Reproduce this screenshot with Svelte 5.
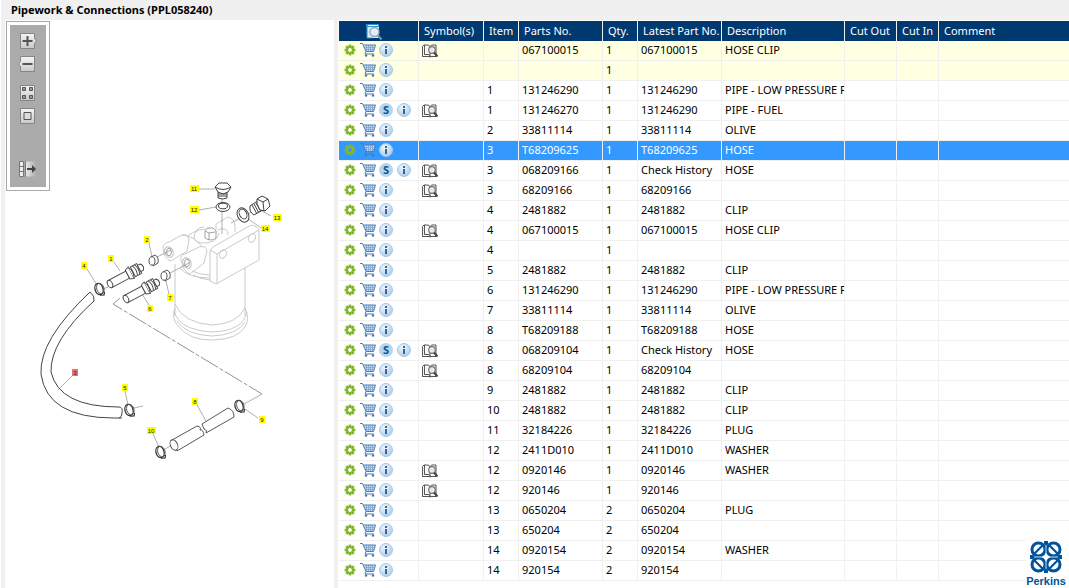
<script>
  const columns = [
    { label: 'Symbol(s)', cls: 'sym' },
    { label: 'Item', cls: 'item' },
    { label: 'Parts No.', cls: 'part' },
    { label: 'Qty.', cls: 'qty' },
    { label: 'Latest Part No.', cls: 'latest' },
    { label: 'Description', cls: 'desc' },
    { label: 'Cut Out', cls: 'out' },
    { label: 'Cut In', cls: 'in' },
    { label: 'Comment', cls: 'comment' }
  ];

  // item, part number, quantity, latest part number, description, flags
  // flags: b = symbol book, s = supersession, y = context row, x = selected row
  const rows = [
    ['', '067100015', '1', '067100015', 'HOSE CLIP', 'by'],
    ['', '', '1', '', '', 'y'],
    ['1', '131246290', '1', '131246290', 'PIPE - LOW PRESSURE F', ''],
    ['1', '131246270', '1', '131246290', 'PIPE - FUEL', 'bs'],
    ['2', '33811114', '1', '33811114', 'OLIVE', ''],
    ['3', 'T68209625', '1', 'T68209625', 'HOSE', 'x'],
    ['3', '068209166', '1', 'Check History', 'HOSE', 'bs'],
    ['3', '68209166', '1', '68209166', '', 'b'],
    ['4', '2481882', '1', '2481882', 'CLIP', ''],
    ['4', '067100015', '1', '067100015', 'HOSE CLIP', 'b'],
    ['4', '', '1', '', '', ''],
    ['5', '2481882', '1', '2481882', 'CLIP', ''],
    ['6', '131246290', '1', '131246290', 'PIPE - LOW PRESSURE F', ''],
    ['7', '33811114', '1', '33811114', 'OLIVE', ''],
    ['8', 'T68209188', '1', 'T68209188', 'HOSE', ''],
    ['8', '068209104', '1', 'Check History', 'HOSE', 'bs'],
    ['8', '68209104', '1', '68209104', '', 'b'],
    ['9', '2481882', '1', '2481882', 'CLIP', ''],
    ['10', '2481882', '1', '2481882', 'CLIP', ''],
    ['11', '32184226', '1', '32184226', 'PLUG', ''],
    ['12', '2411D010', '1', '2411D010', 'WASHER', ''],
    ['12', '0920146', '1', '0920146', 'WASHER', 'b'],
    ['12', '920146', '1', '920146', '', 'b'],
    ['13', '0650204', '2', '0650204', 'PLUG', ''],
    ['13', '650204', '2', '650204', '', ''],
    ['14', '0920154', '2', '0920154', 'WASHER', ''],
    ['14', '920154', '2', '920154', '', '']
  ];

  // callout number, centre x, centre y
  const callouts = [
    ['11', 194, 189], ['12', 194, 210], ['13', 277, 218], ['14', 265, 229],
    ['2', 147, 240], ['1', 111, 259], ['4', 84, 266], ['7', 170, 298],
    ['6', 150, 309], ['3', 75, 373], ['5', 125, 388], ['8', 195, 402],
    ['9', 262, 420], ['10', 151, 431]
  ];

  const teeth = [0, 45, 90, 135, 180, 225, 270, 315];
</script>

{#snippet gear()}
  <svg class="gear" viewBox="0 0 12 12" width="12" height="12" aria-hidden="true">
    {#each teeth as a}
      <rect x="4.700" y="0.600" width="2.600" height="3" fill="#83b72a" transform="rotate({a} 6 6)" />
    {/each}
    <circle cx="6" cy="6" r="3" fill="none" stroke="#83b72a" stroke-width="2.200" />
  </svg>
{/snippet}

{#snippet cart()}
  <svg class="cart" viewBox="0 0 16 14" width="16" height="14" aria-hidden="true">
    <path d="M4 2h11l-1.500 6H6z" fill="#c9dcf0" />
    <path d="M6.500 2v6M8.500 2v6M10.500 2v6M12.500 2v6M4 4.500h11M5 6.500h9" stroke="#7fa3cf" stroke-width=".8" />
    <path d="M0 .5h2.500L6 8.500h7.500L15.500 2H3.500M6 8.500l-1 2.500h9" fill="none" stroke="#4f7cb4" />
    <circle cx="6" cy="12.500" r="1.300" fill="#4f7cb4" /><circle cx="13" cy="12.500" r="1.300" fill="#4f7cb4" />
  </svg>
{/snippet}

{#snippet info()}
  <svg viewBox="0 0 14 14" width="14" height="14" aria-hidden="true">
    <circle cx="7" cy="7" r="6.500" fill="url(#ball)" stroke="#a6c8e2" />
    <path d="M6 3h2v2H6zM6 6h2v5H6z" fill="#2f67a5" />
  </svg>
{/snippet}

{#snippet clip(x, y)}
  <g transform="translate({x} {y}) rotate(-18)">
    <ellipse rx="4" ry="5.600" fill="#fff" stroke="#333" stroke-width="1.300" />
    <ellipse cx="1.400" rx="3.600" ry="5.400" fill="none" stroke="#555" stroke-width=".9" />
    <path d="M-1 6.200l4 .9 1.400-2.600" fill="none" stroke="#333" stroke-width="1.200" />
  </g>
{/snippet}

{#snippet pipe(x, y)}
  <g transform="translate({x} {y}) rotate(-28)" fill="#fff" stroke="#444" stroke-width=".9">
    <path d="M0-4h20v8H0z" />
    <ellipse rx="2.400" ry="4" />
    <path d="M20-5l4-1.500v13L20 5z" />
    <path d="M24-6.500q3 6.500 0 13M26-5.500h7v11h-7z" />
    <path d="M28-5.500q3 5.500 0 11M30.500-5.500q3 5.500 0 11M33-3.500h3q3 3.500 0 7h-3z" />
  </g>
{/snippet}

<svg class="defs" width="0" height="0" aria-hidden="true">
  <defs>
    <radialGradient id="ball" cx=".4" cy=".3" r=".8">
      <stop offset="0" stop-color="#eef6fc" /><stop offset="1" stop-color="#a5c8e4" />
    </radialGradient>
    <linearGradient id="key" x2="0" y2="1">
      <stop offset="0" stop-color="#f5f5f5" /><stop offset="1" stop-color="#c8c8c8" />
    </linearGradient>
    <linearGradient id="fade">
      <stop offset="0" stop-color="#eee" /><stop offset="1" stop-color="#ababab" />
    </linearGradient>
  </defs>
</svg>

<div class="app">
  <h1>Pipework &amp; Connections (PPL058240)</h1>
  <main>
    <section class="drawing" aria-label="Parts drawing">
      <svg class="sheet" viewBox="5 20 329 568" width="329" height="568">
        <!-- filter housing -->
        <g fill="none" stroke="#c4c4c4" stroke-width=".9">
          <path d="M175 264v52M245 268v48M175 308q-4 10 3 18 12 15 35 14 25-1 32-13 5-8 0-19M174 311q5 19 38 21 31-1 35-20M177 321q9 14 35 15 25-1 33-14M175 304q8 19 37 21 25-1 33-17" />
          <path d="M185 240q5-9 20-11M180 268q8 10 30 10" />
          <path d="M216 230v-6l12-7q6 1 7 9v6" fill="#fff" />
          <path d="M163 248q0-5 6-6l13-7q6-2 7 5l-2 11-16 10q-7-2-8-13z" fill="#fff" />
          <path d="M182 235q14 1 22 15M194 238q1-11 10-11M219 233q-2 11-18 10-8-2-7-6" />
          <path d="M181 260q-1-5 4-6l14-7q7-2 8 4l-3 12-14 11q-7-3-9-14z" fill="#fff" />
          <path d="M193 275q7 4 17 5M192 271q8 4 18 4" />
          <path d="M210 251l3-4 38-22q7 1 8 6v29l-43 24-6-3z" fill="#fff" />
          <path d="M217 284v-30l42-24M210 250l7 4" />
          <ellipse cx="223" cy="254" rx="3.200" ry="4.500" transform="rotate(25 223 254)" />
          <ellipse cx="252" cy="238" rx="3.200" ry="4.500" transform="rotate(25 252 238)" />
          <path d="M205 238v-7l2-3h6l3 3v7q-5 4-11 0zM205 231l4 2 6-1M209 233v7" fill="#fff" stroke="#999" />
          <path d="M216 233q2-5 8-4 6 2 3 6" />
        </g>
        <g fill="none" stroke="#999" stroke-width=".9">
          <ellipse cx="169" cy="252" rx="4" ry="5.500" transform="rotate(-25 169 252)" stroke="#bbb" />
          <ellipse cx="169" cy="252" rx="2.400" ry="3.800" />
          <ellipse cx="187" cy="263" rx="4" ry="5.500" transform="rotate(-25 187 263)" stroke="#bbb" />
          <ellipse cx="187" cy="263" rx="2.400" ry="3.800" />
        </g>
        <!-- leader and centre lines -->
        <g fill="none" stroke="#999" stroke-width=".8">
          <path d="M198 189h17M199 210l17-3M222 199v35M271 216l-9-5M261 228l-14-10M231 223l26-14M149 243l3 14M114 262l6 9M87 269l10 16M169 294l-3-13M149 305l-7-11M72 376l-14 14M125 391l3 14M134 408l9-2M197 405l9 16M258 418l-13-9M153 434l6 13M157 257l14-7M170 273l19-10M103 289l5-2M165 449l7-4M244 404l18-10" />
          <path d="M120 298l-7 6 149 90" stroke="#777" stroke-dasharray="20 2 4 2" />
        </g>
        <!-- curved hose -->
        <path d="M90 292q-51 48-49 82 6 44 73 44h8" fill="none" stroke="#444" />
        <path d="M94 301q-44 40-43 71 8 35 68 35" fill="none" stroke="#444" />
        <path d="M90 292q5 4 4 9M119 407q4 0 3 6 0 4-3 5" fill="none" stroke="#444" />
        {@render pipe(110, 284)}
        {@render pipe(126, 299)}
        {@render clip(99, 289)}
        {@render clip(129, 410)}
        {@render clip(239, 406)}
        {@render clip(160, 452)}
        <!-- olives -->
        <g fill="#fff" stroke="#555">
          <path d="M151 257l4-2q4 2 3 8l-5 3zM163 272l4-2q4 2 3 8l-5 3z" />
          <ellipse cx="152" cy="261" rx="3" ry="4.200" /><ellipse cx="164" cy="276" rx="3" ry="4.200" />
        </g>
        <!-- straight hose in two parts -->
        <g fill="#fff" stroke="#444" stroke-width=".9">
          <path d="M172 440l25-14q5 1 3 4 3-1 4 5l-27 16z" />
          <ellipse cx="174" cy="445" rx="3.500" ry="5.500" transform="rotate(-25 174 445)" />
          <path d="M202 424l26-16q6 2 6 9l-28 16q2-3-2-4z" />
        </g>
        <!-- plugs and washers -->
        <g fill="#fff" stroke="#444">
          <path d="M218 191h9v7q-4 2-9 0z" />
          <path d="M215 187l4-4 8 0 4 4-3 5-5 2-5-2z" />
          <path d="M215 187q8 5 16 0M218 194h9M218 196h9" fill="none" />
          <path d="M250 206l9-6 5 9-10 6q-5-3-4-9z" />
          <path d="M252 205l5 9M254 204l5 9M256 203l5 9" />
          <path d="M257 199l5-3 6 3 2 7-5 5-5-1-3-6zM257 199l6 3 5-3M263 202l1 9" />
        </g>
        <g fill="#fff" stroke="#444">
          <ellipse cx="223" cy="207" rx="7" ry="4.500" /><ellipse cx="223" cy="206" rx="4.500" ry="2.800" />
          <ellipse cx="243" cy="215" rx="5.500" ry="7.500" transform="rotate(-28 243 215)" />
          <ellipse cx="243" cy="214" rx="3.500" ry="5.200" transform="rotate(-28 243 214)" />
        </g>
        {#each callouts as [n, x, y]}
          <rect x={n.length > 1 ? x - 4 : x - 3} y={y - 4} width={n.length > 1 ? 9 : 6} height="7" fill={n === '3' ? '#f07070' : '#ff0'} />
          <text {x} y={y + 2} class="callout">{n}</text>
        {/each}
      </svg>
      <div class="frame">
        <div class="tools">
          <button aria-label="Zoom in"><svg viewBox="0 0 20 16" width="20" height="16"><path d="M2.500.5h14v5l2 2.500-2 2.500v5h-14z" fill="url(#key)" stroke="#858585" /><path d="M4.500 8h10M9.500 3v10" stroke="#555" stroke-width="2" /></svg></button>
          <button aria-label="Zoom out" class="out-key"><svg viewBox="0 0 20 16" width="20" height="16"><path d="M2.500.5h14v15h-14v-5L.500 8l2-2.500z" fill="url(#key)" stroke="#858585" /><path d="M4.500 8h10" stroke="#555" stroke-width="2" /></svg></button>
          <button aria-label="Fit page"><svg viewBox="0 0 20 16" width="20" height="16"><path d="M2.500.5h14v15h-14z" fill="url(#key)" stroke="#858585" /><path d="M4.500 2.500h3v3h-3zM11.500 2.500h3v3h-3zM4.500 10.500h3v3h-3zM11.500 10.500h3v3h-3z" fill="#999" stroke="#555" /></svg></button>
          <button aria-label="Actual size" class="actual"><svg viewBox="0 0 20 16" width="20" height="16"><path d="M2.500.5h14v15h-14z" fill="url(#key)" stroke="#858585" /><path d="M6 4.500h7v7H6z" fill="#ddd" stroke="#555" /></svg></button>
          <button aria-label="Move panel"><svg viewBox="0 0 20 16" width="20" height="16"><path d="M7 .5h11v15H7z" fill="url(#fade)" /><path d="M1.500.5h4v15h-4zM1.500 5.500h4M1.500 10.500h4M7.500 0v16" fill="#eee" stroke="#777" /><path d="M9 7h5V4l4 4-4 4V9H9z" fill="#444" /></svg></button>
        </div>
      </div>
    </section>

    <section class="list" aria-label="Parts list">
      <table>
        <thead>
          <tr>
            <th class="icons">
              <button aria-label="Search parts"><svg viewBox="0 0 17 16" width="17" height="16"><path d="M1 1h12v13H1z" fill="#d8ebf7" /><path d="M0 0h13v3H0z" fill="#2d92cf" /><path d="M2 1.500h10" stroke="#fff" /><path d="M1 3v11h5" fill="none" stroke="#2d92cf" /><circle cx="8.500" cy="8" r="4.500" fill="#e2edf5" stroke="#8fa9bf" stroke-width="1.400" /><path d="M12 11.500l3.500 4" stroke="#5f93c4" stroke-width="2.200" /></svg></button>
            </th>
            {#each columns as c}
              <th class={c.cls}>{c.label}</th>
            {/each}
          </tr>
        </thead>
        <tbody>
          {#each rows as [item, part, qty, latest, desc, flags]}
            <tr class:context={flags.includes('y')} class:selected={flags.includes('x')}>
              <td class="icons">
                <div class="actions">
                  <button aria-label="Options">{@render gear()}</button>
                  <button aria-label="Add to cart">{@render cart()}</button>
                  {#if flags.includes('s')}
                    <button class="super">S</button>
                  {/if}
                  <button aria-label="Information">{@render info()}</button>
                </div>
              </td>
              <td class="book">
                {#if flags.includes('b')}
                  <button aria-label="Symbols"><svg viewBox="0 0 16 14" width="16" height="14"><path d="M.5 2.500L2 1h4l2 1.500L9.500 1H14v11.500H9L8 13l-1-.5H.500z" fill="#f6f6f2" stroke="#555" /><path d="M2.500 1v9.500H7l1 1.500M8 2.500V12M.5 12.500h13" fill="none" stroke="#555" /><circle cx="10" cy="6" r="3.300" fill="#e8e8e8" stroke="#777" stroke-width="1.200" /><path d="M12 8.500l3.500 4" stroke="#444" stroke-width="2" /></svg></button>
                {/if}
              </td>
              <td>{item}</td>
              <td>{part}</td>
              <td>{qty}</td>
              <td>{latest}</td>
              <td>{desc}</td>
              <td></td>
              <td></td>
              <td></td>
            </tr>
          {/each}
        </tbody>
      </table>
      <div class="brand">
        <svg viewBox="0 0 34 34" width="34" height="34" aria-hidden="true">
          <g fill="none" stroke="#00539b" stroke-width="3">
            <circle cx="9.500" cy="9.500" r="6.500" /><circle cx="24.500" cy="9.500" r="6.500" />
            <circle cx="9.500" cy="24.500" r="6.500" /><circle cx="24.500" cy="24.500" r="6.500" />
            <path d="M5 14l9-9M20 5l9 9M5 20l9 9M20 29l9-9" stroke-width="2.200" />
          </g>
          <path d="M17 5v24M5 17h24" stroke="#fff" stroke-width=".8" />
          <path d="M15 1h4v3l-2 2-2-2zM15 33h4v-3l-2-2-2 2zM1 15v4h3l2-2-2-2zM33 15v4h-3l-2-2 2-2z" fill="#00539b" />
        </svg>
        <strong>Perkins</strong>
      </div>
    </section>
  </main>
</div>

<style>
  :global(body) { background: #f0f0f0; }
  .defs { position: absolute; }
  .app {
    box-sizing: border-box;
    min-height: 100vh;
    display: flex;
    flex-direction: column;
    border-left: 1px solid #fff;
    font: 11px/16px "Noto Sans", "Open Sans", sans-serif;
    color: #000;
  }
  h1 { margin: 0; padding: 2px 10px; font-size: 11px; line-height: 16px; font-weight: 700; }
  main { flex: 1; display: flex; gap: 4px; padding-left: 4px; }
  button { display: inline-flex; padding: 0; border: 0; background: none; font: inherit; color: inherit; }
  svg { display: block; }
  .drawing { position: relative; flex: 0 0 329px; background: #fff; }
  .sheet { position: absolute; inset: 0 auto auto 0; }
  .callout { font: 6px "Liberation Sans", Arial, sans-serif; text-anchor: middle; fill: #222; }
  .frame { position: relative; width: 36px; margin: 1px; padding: 3px; border: 1px solid #aaa; background: #fff; }
  .tools { display: flex; flex-direction: column; align-items: center; gap: 7px; padding: 8px 0 10px; background: #ababab; }
  .out-key { margin-bottom: 6px; }
  .actual { margin-bottom: 30px; }
  .list { position: relative; flex: 1; min-width: 0; padding: 1px 0 0 1px; background: #fff; overflow: hidden; }
  table { width: 100%; table-layout: fixed; border-collapse: separate; border-spacing: 0; }
  th, td { box-sizing: border-box; height: 20px; padding: 0 0 0 3px; overflow: hidden; white-space: nowrap; text-align: left; vertical-align: middle; line-height: 16px; }
  th { padding-left: 5px; background: #003870; color: #fff; font-weight: 400; border-right: 1px solid #f0f0f0; }
  td { padding-bottom: 2px; border-right: 1px solid #f0f0f0; border-bottom: 1px solid #f0f0f0; }
  th:last-child, td:last-child { border-right: 0; }
  .icons { width: 80px; }
  th.icons { text-align: center; padding: 0 8px 0 0; }
  th.icons button { vertical-align: middle; }
  .sym { width: 65px; }
  .item { width: 35px; }
  .part { width: 84px; }
  .qty { width: 35px; }
  .latest { width: 84px; }
  .desc { width: 123px; }
  .out { width: 52px; }
  .in { width: 42px; }
  .actions { display: flex; align-items: center; gap: 4px; padding-left: 2px; }
  .cart { margin-right: -1px; }
  .super { width: 14px; height: 14px; justify-content: center; border-radius: 50%; background: #b9d5ea; color: #005792; font-weight: 700; line-height: 14px; }
  .book button { vertical-align: middle; }
  .context td { background: #ffffe1; }
  .selected td { background: #39f; color: #fff; }
  .brand { position: absolute; right: 0; bottom: 0; display: flex; flex-direction: column; align-items: center; box-sizing: border-box; width: 43px; padding-right: 3px; background: #fff; color: #00539b; }
  .brand strong { font: 700 11px/14px "Liberation Sans", Arial, sans-serif; }
</style>
